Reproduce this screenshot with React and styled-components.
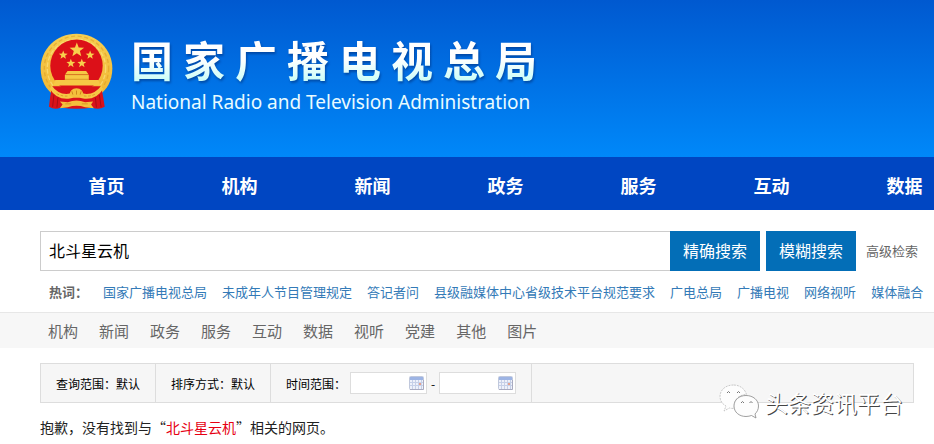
import styled, { createGlobalStyle } from 'styled-components'
import React, { useState } from 'react';

const navItems = ['首页', '机构', '新闻', '政务', '服务', '互动', '数据'];
const hotWords = [
    '国家广播电视总局',
    '未成年人节目管理规定',
    '答记者问',
    '县级融媒体中心省级技术平台规范要求',
    '广电总局',
    '广播电视',
    '网络视听',
    '媒体融合',
];
const categories = ['机构', '新闻', '政务', '服务', '互动', '数据', '视听', '党建', '其他', '图片'];

const starPoints = (cx, cy, r) => {
    const points = [];
    for (let i = 0; i < 10; i++) {
        const radius = i % 2 ? r * 0.42 : r;
        const angle = (Math.PI / 5) * i - Math.PI / 2;
        points.push(`${cx + radius * Math.cos(angle)},${cy + radius * Math.sin(angle)}`);
    }
    return points.join(' ');
}

const Emblem = () => (
    <EmblemSvg viewBox="0 0 220 234" aria-hidden="true">
        <defs>
            <linearGradient id="gold" x1="0" y1="0" x2="0" y2="1">
                <stop offset="0" stopColor="#f6cf52" />
                <stop offset="1" stopColor="#f2b632" />
            </linearGradient>
        </defs>
        <path
            d="M110 2 C172 2 218 50 218 106 C218 146 200 170 182 184 C150 200 70 200 38 184 C20 170 2 146 2 106 C2 50 48 2 110 2 Z"
            fill="url(#gold)"
        />
        <circle cx="110" cy="106" r="97" fill="none" stroke="#d9981f" strokeWidth="4" strokeDasharray="12 8" opacity="0.5" />
        <circle cx="110" cy="106" r="88" fill="none" stroke="#fbe68a" strokeWidth="4" strokeDasharray="14 6" opacity="0.6" />
        <ellipse cx="110" cy="98" rx="79" ry="79" fill="#dc1018" />
        <path d="M36 160 Q30 192 27 222 Q46 232 62 224 Q110 232 158 224 Q176 232 195 222 Q191 192 184 160 Z" fill="#d9121a" />
        <path d="M42 186 L38 222 M54 194 L51 224 M167 194 L170 224 M179 186 L184 222" stroke="#a80d14" strokeWidth="3" />
        <polygon points={starPoints(111, 51, 23)} fill="#f8cf4c" />
        <polygon points={starPoints(70, 66, 14)} fill="#f8cf4c" />
        <polygon points={starPoints(151, 66, 14)} fill="#f8cf4c" />
        <polygon points={starPoints(93, 91, 14)} fill="#f8cf4c" />
        <polygon points={starPoints(126, 91, 14)} fill="#f8cf4c" />
        <path d="M83 114 H139 L146 124 H76 Z M75 125 H147 V141 H75 Z M46 141 H176 L182 158 H40 Z" fill="#f6c845" />
        <path d="M78 125 H144 M75 139 H147" stroke="#cf861c" strokeWidth="2" />
        <path d="M34 156 Q56 188 90 182 Q110 168 130 182 Q164 188 186 156 L190 168 Q170 202 130 197 Q110 190 90 197 Q50 202 30 168 Z" fill="#f6c845" />
        <path d="M50 182 Q68 192 88 189 M132 189 Q152 192 170 182" fill="none" stroke="#cf861c" strokeWidth="2" strokeDasharray="8 5" />
        <path d="M88 188 Q90 167 110 166 Q130 167 132 188 Q110 200 88 188 Z" fill="#f4bf3c" />
        <path d="M99 185 L96 175 M110 185 V173 M121 185 L124 175" stroke="#cf861c" strokeWidth="3" />
        <path d="M60 206 L84 208 Q110 198 136 208 L160 206 L154 215 L162 226 L136 223 Q110 214 84 223 L60 226 L68 215 Z" fill="#f4bf3c" />
        <path d="M76 213 L94 213 M126 213 L144 213" stroke="#cf861c" strokeWidth="2" />
    </EmblemSvg>
)

const CalendarIcon = () => (
    <svg width="15" height="14" viewBox="0 0 15 14" aria-hidden="true">
        <rect x="0.5" y="0.5" width="14" height="13" rx="1" fill="#eef1fa" stroke="#c0c8dc" />
        <rect x="1" y="1" width="13" height="3" fill="#9db4e4" />
        <path d="M1 6.5 H14 M1 9.5 H14 M3.5 4 V13 M6.5 4 V13 M9.5 4 V13 M12.5 4 V13" stroke="#c6d0e8" strokeWidth="1" />
        <rect x="10" y="7" width="2" height="2" fill="#e6a08c" />
        <path d="M1 13.5 H14.5 V4" fill="none" stroke="#a9abc0" />
    </svg>
)

const ChatBubbles = () => (
    <svg width="40" height="36" viewBox="0 0 40 36" aria-hidden="true">
        <g fill="#fdfdfd" strokeWidth="0.8" strokeLinejoin="round">
            <path d="M14.5 1 C6.5 1 1 6 1 12.5 C1 17 3.5 20 7 22 L5 27 L10.5 24 C12 24.5 14 24.5 15.5 24.3 C14 16 20 10.5 27.5 10.5 C26 5 21 1 14.5 1 Z" stroke="#bbb" strokeDasharray="2 1" />
            <path d="M27 11.5 C20 11.5 15 16 15 22 C15 28 20 32.5 27 32.5 C29 32.5 31 32 32.5 31.5 L37 34 L36 30 C38 28 39.5 25.5 39.5 22 C39.5 16 34 11.5 27 11.5 Z" stroke="#888" />
        </g>
        <g fill="none" stroke="#777" strokeWidth="1">
            <path d="M8 9 Q9.5 6 11 9 M18 9 Q19.5 6 21 9 M22 19 Q23.5 16 25 19 M30.5 19 Q32 16 33.5 19" />
        </g>
    </svg>
)

const DateField = props => {
    const { label } = props;
    const [date, setDate] = useState('');

    return (
        <DateBox>
            <DateInput aria-label={label} value={date} onChange={e => setDate(e.target.value)} />
            <CalendarIcon />
        </DateBox>
    )
}

const App = () => {
    const [keyword, setKeyword] = useState('北斗星云机');

    return (
        <Page>
            <GlobalStyle />

            <Header>
                <Emblem />
                <Titles>
                    <Title>国家广播电视总局</Title>
                    <SubTitle>National Radio and Television Administration</SubTitle>
                </Titles>
            </Header>

            <NavBar>
                {navItems.map(item => <NavLink href="#" key={item}>{item}</NavLink>)}
            </NavBar>

            <main>
                <SearchForm onSubmit={e => e.preventDefault()}>
                    <SearchInput aria-label="搜索" value={keyword} onChange={e => setKeyword(e.target.value)} />
                    <ButtonGroup>
                        <SearchButton type="submit">精确搜索</SearchButton>
                        <SearchButton type="submit">模糊搜索</SearchButton>
                    </ButtonGroup>
                    <AdvancedLink href="#">高级检索</AdvancedLink>
                </SearchForm>

                <HotRow>
                    <HotLabel>热词：</HotLabel>
                    {hotWords.map(word => <HotLink href="#" key={word}>{word}</HotLink>)}
                </HotRow>

                <CategoryBar>
                    {categories.map(item => <CategoryLink href="#" key={item}>{item}</CategoryLink>)}
                </CategoryBar>

                <Results>
                    <FilterBar>
                        <FilterCell>查询范围：默认</FilterCell>
                        <FilterCell>排序方式：默认</FilterCell>
                        <FilterCell>
                            <RangeLabel>时间范围：</RangeLabel>
                            <DateField label="开始时间" />
                            <Dash>-</Dash>
                            <DateField label="结束时间" />
                        </FilterCell>
                    </FilterBar>
                    <Message>抱歉，没有找到与“<Keyword>北斗星云机</Keyword>”相关的网页。</Message>
                    <Watermark>
                        <ChatBubbles />
                        <span>头条资讯平台</span>
                    </Watermark>
                </Results>
            </main>
        </Page>
    )
}

export default App;

const GlobalStyle = createGlobalStyle`
  * {
    box-sizing: border-box;
  }
  body {
    margin: 0;
    background: #fff;
    font-family: "Noto Sans CJK SC", sans-serif;
  }
  a {
    text-decoration: none;
  }
  input, button {
    font-family: inherit;
  }
`

const Page = styled.div`
  overflow-x: hidden;
`

const Header = styled.header`
  display: flex;
  align-items: flex-start;
  gap: 18px;
  height: 157px;
  padding: 33px 40px 0;
  background: linear-gradient(#0059d0, #0088f9);
`

const EmblemSvg = styled.svg`
  flex: none;
  width: 73px;
  height: 78px;
`

const Titles = styled.div`
  white-space: nowrap;
`

const Title = styled.h1`
  margin: 0;
  font-size: 42px;
  line-height: 52px;
  font-weight: 700;
  letter-spacing: 10px;
  color: transparent;
  background: linear-gradient(#fff 50%, #cdfdf8 90%);
  background-clip: text;
  filter: drop-shadow(1px 2px 1px rgba(0, 40, 110, 0.5));
`

const SubTitle = styled.div`
  color: #e9fbff;
  font-family: "Noto Sans", sans-serif;
  font-size: 19px;
  line-height: 34px;
`

const NavBar = styled.nav`
  display: flex;
  height: 53px;
  padding-left: 40px;
  background-color: #0046c2;
`

const NavLink = styled.a`
  flex: 0 0 133px;
  color: white;
  font-size: 18px;
  font-weight: 700;
  line-height: 56px;
  text-align: center;
`

const SearchForm = styled.form`
  display: flex;
  align-items: center;
  padding: 21px 16px 0 40px;
`

const SearchInput = styled.input`
  flex: 1;
  min-width: 0;
  height: 40px;
  padding: 0 8px 2px;
  border: 1px solid #ccc;
  border-right: 0;
  color: #000;
  font-size: 16px;
  outline: none;
`

const ButtonGroup = styled.div`
  display: flex;
  gap: 6px;
`

const SearchButton = styled.button`
  width: 90px;
  height: 40px;
  padding: 0 0 2px;
  border: 0;
  background-color: #036eb7;
  color: white;
  font-size: 16px;
`

const AdvancedLink = styled.a`
  margin-left: 10px;
  padding-bottom: 2px;
  color: #666;
  font-size: 13px;
  white-space: nowrap;
`

const HotRow = styled.div`
  display: flex;
  gap: 15px;
  padding: 11px 0 10px 49px;
  font-size: 13px;
  line-height: 20px;
  white-space: nowrap;
`

const HotLabel = styled.span`
  color: #666;
  font-weight: 700;
`

const HotLink = styled.a`
  color: #337ab7;
`

const CategoryBar = styled.nav`
  display: flex;
  gap: 21px;
  height: 36px;
  padding-left: 48px;
  border-top: 1px solid #e7e7e7;
  background-color: #f7f7f7;
`

const CategoryLink = styled.a`
  color: #666;
  font-size: 15px;
  line-height: 36px;
`

const Results = styled.section`
  position: relative;
  padding: 15px 20px 0 40px;
`

const FilterBar = styled.div`
  display: flex;
  height: 40px;
  border: 1px solid #ddd;
  background-color: #f6f6f6;
  font-size: 12px;
`

const FilterCell = styled.div`
  display: flex;
  align-items: center;
  padding: 0 15px;
  border-right: 1px solid #ddd;
  color: #000;
  white-space: nowrap;
`

const RangeLabel = styled.span`
  margin-right: 4px;
`

const DateBox = styled.div`
  display: flex;
  align-items: center;
  width: 77px;
  height: 22px;
  padding-right: 2px;
  border: 1px solid #ddd;
  background-color: #fff;
`

const DateInput = styled.input`
  flex: 1;
  min-width: 0;
  height: 20px;
  padding: 0 2px;
  border: 0;
  background: transparent;
  font-size: 12px;
  outline: none;
`

const Dash = styled.span`
  width: 12px;
  text-align: center;
`

const Message = styled.p`
  margin: 0;
  padding: 12px 0;
  color: #222;
  font-size: 14px;
  line-height: 24px;
`

const Keyword = styled.span`
  color: #e60012;
`

/* account mark lying over the corner of the filter bar */
const Watermark = styled.div`
  position: absolute;
  top: 36px;
  right: 31px;
  display: flex;
  align-items: center;
  gap: 6px;
  color: #fff;
  font-size: 23px;
  line-height: 32px;
  text-shadow: 1px 1px 0 #444;
`
